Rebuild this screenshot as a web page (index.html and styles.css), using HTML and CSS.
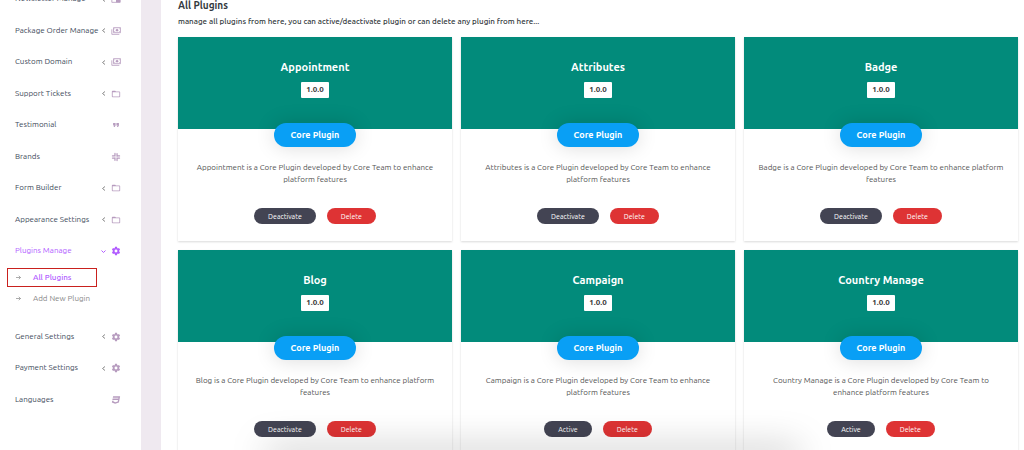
FILE: index.html
```
<!DOCTYPE html>
<html lang="en">
<head>
    <meta charset="UTF-8">
    <meta name="viewport" content="width=device-width, initial-scale=1.0">
    <title>All Plugins</title>
    <link rel="stylesheet" href="styles.css">
</head>
<body>

    <!-- Icons -->
    <svg class="icon-defs" xmlns="http://www.w3.org/2000/svg">
        <symbol id="icon-news" viewBox="0 0 24 24">
            <path fill="none" stroke="currentColor" stroke-width="2" d="M2 4h20v16H2z"/>
            <path d="M12 9h10v11H12z"/>
        </symbol>
        <symbol id="icon-package" viewBox="0 0 24 24">
            <path fill="none" stroke="currentColor" stroke-width="2" d="M6 4h17v12H6zM2 8v12h18"/>
            <path d="M14.500 6l4 4-4 4-4-4zM8 6h2v2H8zM19 12h2v2h-2zM19 6h2v2h-2zM8 12h2v2H8z"/>
        </symbol>
        <symbol id="icon-folder" viewBox="0 0 24 24">
            <path d="M20 18H4V8h16m0-2h-8l-2-2H4c-1.110 0-2 .890-2 2v12a2 2 0 0 0 2 2h16a2 2 0 0 0 2-2V8c0-1.110-.900-2-2-2z"/>
        </symbol>
        <symbol id="icon-quote" viewBox="0 0 24 24">
            <path d="M14 17h3l2-4V7h-6v6h3M6 17h3l2-4V7H5v6h3z"/>
        </symbol>
        <symbol id="icon-brands" viewBox="0 0 24 24">
            <path fill="none" stroke="currentColor" stroke-width="3" stroke-linecap="round" d="M9.500 3.500v6h-6M14.500 4v6M14.500 9.500h6M14.500 20.500v-6h6M9.500 20v-6M9.500 14.500h-6"/>
        </symbol>
        <symbol id="icon-gear" viewBox="0 0 24 24">
            <path d="M12 15.500A3.500 3.500 0 0 1 8.500 12 3.500 3.500 0 0 1 12 8.500a3.500 3.500 0 0 1 3.500 3.500 3.500 3.500 0 0 1-3.500 3.500m7.430-2.530c.04-.32.07-.64.07-.97s-.03-.66-.07-1l2.110-1.630c.19-.15.24-.42.12-.64l-2-3.460c-.12-.22-.39-.31-.61-.22l-2.490 1c-.52-.39-1.060-.73-1.690-.98l-.37-2.650A.506.506 0 0 0 14 2h-4c-.25 0-.46.18-.5.42l-.37 2.650c-.63.25-1.170.59-1.690.98l-2.490-1c-.22-.09-.49 0-.61.22l-2 3.460c-.13.22-.07.49.12.64L4.570 11c-.04.34-.07.67-.07 1s.03.65.07.97l-2.110 1.660c-.19.15-.25.42-.12.64l2 3.460c.12.22.39.3.61.22l2.490-1.010c.52.4 1.060.74 1.690.99l.37 2.650c.04.24.25.42.5.42h4c.25 0 .46-.18.5-.42l.37-2.650c.63-.26 1.170-.59 1.690-.99l2.490 1.010c.22.08.49 0 .61-.22l2-3.460c.12-.22.07-.49-.12-.64z"/>
        </symbol>
        <symbol id="icon-language" viewBox="0 0 24 24">
            <path d="m5 3-.65 3.340h13.590L17.500 8.500H3.920l-.66 3.330h13.590l-.76 3.810-5.480 1.810-4.750-1.810.33-1.640H2.850l-.79 4 7.850 3 9.050-3 1.200-6.030.24-1.210L21.940 3z"/>
        </symbol>
        <symbol id="icon-left" viewBox="0 0 10 10">
            <path fill="none" stroke="currentColor" stroke-width="2" d="M8 1 3 5l5 4"/>
        </symbol>
        <symbol id="icon-down" viewBox="0 0 10 10">
            <path fill="none" stroke="currentColor" stroke-width="2" d="m1 3 4 4 4-4"/>
        </symbol>
        <symbol id="icon-right" viewBox="0 0 10 10">
            <path fill="none" stroke="currentColor" stroke-width="1.4" d="M0 5h9M5.500 1.500 9 5 5.500 8.500"/>
        </symbol>
    </svg>

    <div class="page">
        <!-- Sidebar -->
        <nav class="sidebar">
            <ul class="menu">
                <li><a href="#">Newsletter Manage <svg class="arrow"><use href="#icon-left"/></svg><svg class="icon"><use href="#icon-news"/></svg></a></li>
                <li><a href="#">Package Order Manage <svg class="arrow"><use href="#icon-left"/></svg><svg class="icon"><use href="#icon-package"/></svg></a></li>
                <li><a href="#">Custom Domain <svg class="arrow"><use href="#icon-left"/></svg><svg class="icon"><use href="#icon-package"/></svg></a></li>
                <li><a href="#">Support Tickets <svg class="arrow"><use href="#icon-left"/></svg><svg class="icon"><use href="#icon-folder"/></svg></a></li>
                <li><a href="#">Testimonial <svg class="icon"><use href="#icon-quote"/></svg></a></li>
                <li><a href="#">Brands <svg class="icon"><use href="#icon-brands"/></svg></a></li>
                <li><a href="#">Form Builder <svg class="arrow"><use href="#icon-left"/></svg><svg class="icon"><use href="#icon-folder"/></svg></a></li>
                <li><a href="#">Appearance Settings <svg class="arrow"><use href="#icon-left"/></svg><svg class="icon"><use href="#icon-folder"/></svg></a></li>
                <li class="active">
                    <a href="#">Plugins Manage <svg class="arrow"><use href="#icon-down"/></svg><svg class="icon"><use href="#icon-gear"/></svg></a>
                    <ul class="sub-menu">
                        <li><a class="current" href="#"><svg class="arrow"><use href="#icon-right"/></svg>All Plugins</a></li>
                        <li><a href="#"><svg class="arrow"><use href="#icon-right"/></svg>Add New Plugin</a></li>
                    </ul>
                </li>
                <li><a href="#">General Settings <svg class="arrow"><use href="#icon-left"/></svg><svg class="icon"><use href="#icon-gear"/></svg></a></li>
                <li><a href="#">Payment Settings <svg class="arrow"><use href="#icon-left"/></svg><svg class="icon"><use href="#icon-gear"/></svg></a></li>
                <li><a href="#">Languages <svg class="icon"><use href="#icon-language"/></svg></a></li>
            </ul>
        </nav>

        <!-- Main Content -->
        <main class="content">
            <h1>All Plugins</h1>
            <p class="intro">manage all plugins from here, you can active/deactivate plugin or can delete any plugin from here...</p>

            <div class="plugins">
                <div class="plugin">
                    <div class="plugin-header">
                        <h2>Appointment</h2>
                        <span class="version">1.0.0</span>
                        <span class="type">Core Plugin</span>
                    </div>
                    <p>Appointment is a Core Plugin developed by Core Team to enhance platform features</p>
                    <div class="buttons">
                        <button type="button">Deactivate</button>
                        <button type="button" class="delete">Delete</button>
                    </div>
                </div>

                <div class="plugin">
                    <div class="plugin-header">
                        <h2>Attributes</h2>
                        <span class="version">1.0.0</span>
                        <span class="type">Core Plugin</span>
                    </div>
                    <p>Attributes is a Core Plugin developed by Core Team to enhance platform features</p>
                    <div class="buttons">
                        <button type="button">Deactivate</button>
                        <button type="button" class="delete">Delete</button>
                    </div>
                </div>

                <div class="plugin">
                    <div class="plugin-header">
                        <h2>Badge</h2>
                        <span class="version">1.0.0</span>
                        <span class="type">Core Plugin</span>
                    </div>
                    <p>Badge is a Core Plugin developed by Core Team to enhance platform features</p>
                    <div class="buttons">
                        <button type="button">Deactivate</button>
                        <button type="button" class="delete">Delete</button>
                    </div>
                </div>

                <div class="plugin">
                    <div class="plugin-header">
                        <h2>Blog</h2>
                        <span class="version">1.0.0</span>
                        <span class="type">Core Plugin</span>
                    </div>
                    <p>Blog is a Core Plugin developed by Core Team to enhance platform features</p>
                    <div class="buttons">
                        <button type="button">Deactivate</button>
                        <button type="button" class="delete">Delete</button>
                    </div>
                </div>

                <div class="plugin">
                    <div class="plugin-header">
                        <h2>Campaign</h2>
                        <span class="version">1.0.0</span>
                        <span class="type">Core Plugin</span>
                    </div>
                    <p>Campaign is a Core Plugin developed by Core Team to enhance platform features</p>
                    <div class="buttons">
                        <button type="button">Active</button>
                        <button type="button" class="delete">Delete</button>
                    </div>
                </div>

                <div class="plugin">
                    <div class="plugin-header">
                        <h2>Country Manage</h2>
                        <span class="version">1.0.0</span>
                        <span class="type">Core Plugin</span>
                    </div>
                    <p>Country Manage is a Core Plugin developed by Core Team to enhance platform features</p>
                    <div class="buttons">
                        <button type="button">Active</button>
                        <button type="button" class="delete">Delete</button>
                    </div>
                </div>
            </div>
        </main>
    </div>

    <div class="bottom-shadow"></div>

</body>
</html>
```

FILE: styles.css
```
* {
    box-sizing: border-box;
}

body {
    margin: 0;
    background-color: #fff;
    color: #343a40;
    font-family: Ubuntu, "Noto Sans", sans-serif;
    font-size: 8px;
    overflow: hidden;
}

h1, h2, p, ul {
    margin: 0;
    padding: 0;
}

ul {
    list-style: none;
}

a {
    color: inherit;
    text-decoration: none;
}

.icon-defs {
    position: absolute;
    width: 0;
    height: 0;
}

.page {
    display: flex;
    height: 100vh;
}

/* Sidebar */
.sidebar {
    flex: 0 0 161px;
    border-right: 20px solid #efe9f0;
    padding: 0 20px 42px 15px;
}

.menu {
    display: flex;
    flex-direction: column;
    justify-content: space-between;
    height: calc(100% + 9px);
    margin-top: -9px;
    color: #3e4b5b;
    white-space: nowrap;
}

.menu a {
    display: flex;
    align-items: center;
    line-height: 16px;
}

.icon {
    width: 10px;
    height: 10px;
    margin-left: auto;
    fill: currentColor;
    color: #b79cbf;
}

.arrow {
    width: 5px;
    height: 5px;
    margin-left: auto;
    color: #888;
}

.arrow + .icon {
    margin-left: 5px;
}

.menu .active > a,
.menu .active > a svg {
    color: #b15cff;
}

.sub-menu {
    display: flex;
    flex-direction: column;
    gap: 2px;
    margin: 0 24px 0 -8px;
    padding: 9px 0 5px;
}

.sub-menu a {
    gap: 12px;
    height: 19px;
    padding-left: 8px;
    border: 1px solid transparent;
    color: #888;
}

.sub-menu .arrow {
    margin-left: 0;
}

.sub-menu .current {
    border-color: #c9211e;
    color: #b15cff;
    font-weight: 500;
}

/* Main Content */
.content {
    flex: 1;
    padding: 0 6px 0 17px;
}

h1 {
    font-size: 10px;
    font-weight: 600;
    line-height: 11px;
}

.intro {
    margin: 5px 0 9px;
    font-weight: 500;
    line-height: 12px;
}

.plugins {
    display: grid;
    grid-template-columns: repeat(3, 1fr);
    gap: 9px;
}

.plugin {
    padding-bottom: 17px;
    box-shadow: 0 1px 2px rgba(0, 0, 0, 0.15);
    text-align: center;
}

.plugin-header {
    display: flex;
    flex-direction: column;
    align-items: center;
    padding-top: 22px;
    background-color: #028b7b;
    color: #fff;
}

.plugin-header h2 {
    font-size: 11px;
    font-weight: 600;
    line-height: 16px;
}

.version {
    margin-top: 7px;
    padding: 0 5px;
    border-radius: 1px;
    background-color: #fff;
    color: #333;
    font-weight: 600;
    line-height: 16px;
}

.type {
    margin: 25px 0 -18px;
    padding: 0 17px;
    border-radius: 12px;
    background-color: #099ff5;
    box-shadow: 0 0 20px rgba(0, 0, 0, 0.15);
    font-size: 9px;
    font-weight: 600;
    line-height: 24px;
}

.plugin p {
    padding: 33px 13px 0;
    color: #555;
    line-height: 12px;
}

.buttons {
    display: flex;
    justify-content: center;
    gap: 11px;
    margin-top: 22px;
}

.buttons button {
    padding: 0 14px;
    border: none;
    border-radius: 8px;
    background-color: #434453;
    color: #fff;
    font-family: inherit;
    font-size: 7px;
    line-height: 16px;
    cursor: pointer;
}

.buttons .delete {
    background-color: #de3334;
}

/* Shadow rising from the bottom edge */
.bottom-shadow {
    position: fixed;
    right: 22%;
    bottom: -10px;
    left: 26%;
    height: 10px;
    box-shadow: 0 0 36px rgba(0, 0, 0, 0.4);
}
```
